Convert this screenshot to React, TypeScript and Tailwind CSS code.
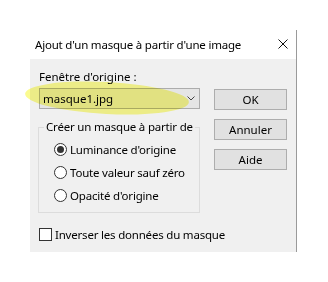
import React from "react";

const OPTIONS = [
  { label: "Luminance d'origine", checked: true },
  { label: "Toute valeur sauf zéro", checked: false },
  { label: "Opacité d'origine", checked: false },
];

function Radio({ checked }: { checked: boolean }) {
  return (
    <span className="flex h-[13px] w-[13px] shrink-0 items-center justify-center rounded-full border border-[#333333] bg-white">
      {checked && <span className="h-[7px] w-[7px] rounded-full bg-[#333333]" />}
    </span>
  );
}

function WinButton({ children }: { children: React.ReactNode }) {
  return (
    <button
      type="button"
      className="flex h-[21px] w-[73px] items-center justify-center border border-[#adadad] bg-[#e1e1e1] leading-none text-black"
    >
      {children}
    </button>
  );
}

export default function App() {
  return (
    <div className="relative h-[282px] w-[328px] bg-white pl-[30px] pt-[30px] font-['Noto_Sans','Liberation_Sans',sans-serif] text-[11.5px] text-black">
      <div className="w-[267px] border-r border-[#9a9a9a]">
        {/* Title bar */}
        <div className="flex h-[29px] items-center justify-between bg-white pl-[5px] pr-[8px]">
          <span className="whitespace-nowrap leading-[14px] tracking-[-0.2px]">Ajout d'un masque à partir d'une image</span>
          <svg width="10" height="10" viewBox="0 0 10 10" className="mb-[1px]">
            <path d="M0.5 0.5 L9.5 9.5 M9.5 0.5 L0.5 9.5" stroke="#111" strokeWidth="1" fill="none" />
          </svg>
        </div>

        {/* Body */}
        <div className="flex h-[193px] bg-[#f0f0f0] pl-[9px]">
          <div className="flex w-[161px] flex-col pt-[11px]">
            <span className="h-[14px] leading-[14px]">Fenêtre d'origine :</span>
            <div className="mt-[4px] flex h-[21px] items-center justify-between border border-[#acacac] bg-[#e5e5e5] pl-[3px] pr-[4px]">
              <span className="leading-[14px]">masque1.jpg</span>
              <svg width="8" height="5" viewBox="0 0 8 5">
                <path d="M0.5 0.5 L4 4 L7.5 0.5" stroke="#444" strokeWidth="1" fill="none" />
              </svg>
            </div>

            <fieldset className="ml-[-1px] mt-[11px] w-[162px] border border-[#dcdcdc] pb-[5px]">
              <legend className="ml-[5px] whitespace-nowrap px-[2px] leading-[14px] tracking-[-0.2px]">Créer un masque à partir de</legend>
              <div className="flex flex-col pl-[15px] pt-[4px]">
                {OPTIONS.map((o) => (
                  <div key={o.label} className="flex h-[23px] items-center gap-[3px]">
                    <Radio checked={o.checked} />
                    <span className="whitespace-nowrap leading-[14px] tracking-[-0.2px]">{o.label}</span>
                  </div>
                ))}
              </div>
            </fieldset>

            <div className="mt-[15px] flex h-[13px] items-center gap-[3px]">
              <span className="h-[13px] w-[13px] shrink-0 border border-[#333333] bg-white" />
              <span className="whitespace-nowrap leading-[14px] tracking-[-0.2px]">Inverser les données du masque</span>
            </div>
          </div>

          <div className="ml-[14px] flex flex-col gap-[9px] pt-[30px]">
            <WinButton>OK</WinButton>
            <WinButton>Annuler</WinButton>
            <WinButton>Aide</WinButton>
          </div>
        </div>
      </div>

      {/* Marker highlight */}
      <div className="pointer-events-none absolute left-[25px] top-[82px] h-[32px] w-[164px] rotate-[3deg] rounded-[50%] bg-[#fbfb90] mix-blend-multiply" />
    </div>
  );
}
